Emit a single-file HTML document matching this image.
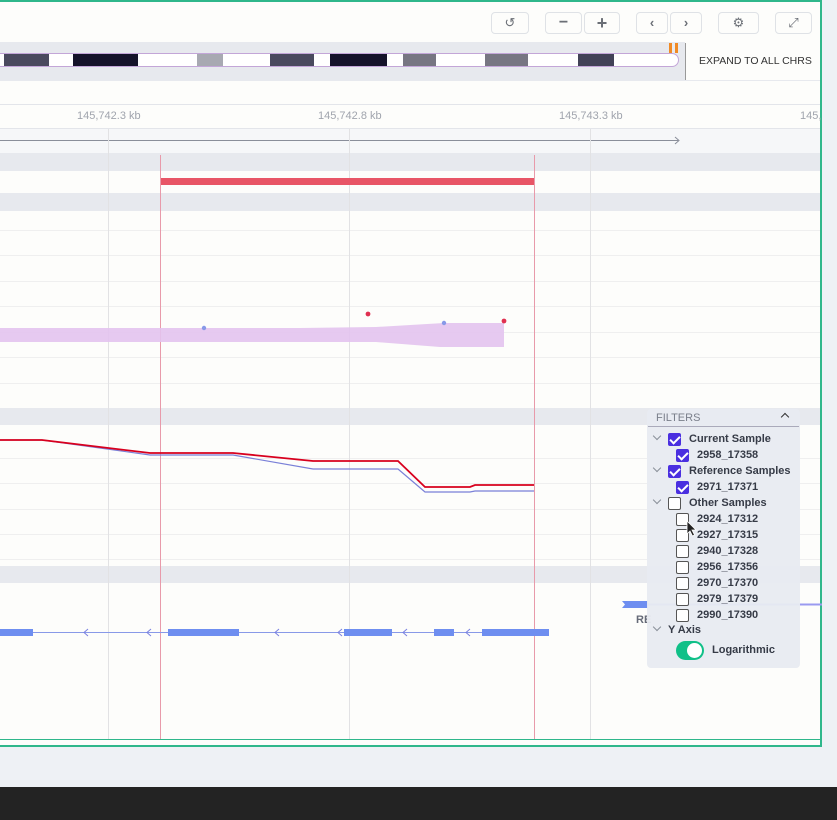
<!DOCTYPE html>
<html><head><style>
*{margin:0;padding:0;box-sizing:border-box}
body{width:837px;height:820px;background:#eef1f5;font-family:"Liberation Sans",sans-serif;position:relative;overflow:hidden}
.a{position:absolute}
.btn{position:absolute;top:12px;height:22px;border:1px solid #dfe2e6;border-radius:4px;background:#fdfdfb;color:#6b6f76;font-size:13px;text-align:center;line-height:20px}
.f{font-size:11px;font-weight:bold;color:#363b47;position:absolute;white-space:nowrap}
.cb{position:absolute;width:13px;height:13px;border:1px solid #555;border-radius:2px;background:#fff}
.cb.on{background:#4a2fe0;border-color:#4a2fe0}
.cb.on::after{content:"";position:absolute;left:3px;top:0px;width:4px;height:8px;border:solid #fff;border-width:0 2px 2px 0;transform:rotate(45deg)}
.chev{position:absolute;width:6px;height:6px;border:solid #8a909a;border-width:0 1.5px 1.5px 0;transform:rotate(45deg)}
</style></head><body>
<div class="a" style="left:0;top:787px;width:837px;height:33px;background:#232323"></div>
<div class="a" style="left:0;top:0;width:822px;height:747px;background:#fdfdfb;border:2px solid #2fb78b;border-left:none"></div>
<div class="btn" style="left:491px;width:38px">&#8634;</div>
<div class="btn" style="left:545px;width:37px;font-size:16px;font-weight:bold">&#8722;</div>
<div class="btn" style="left:584px;width:36px;font-size:18px;font-weight:bold">+</div>
<div class="btn" style="left:636px;width:32px;font-weight:bold">&#8249;</div>
<div class="btn" style="left:670px;width:32px;font-weight:bold">&#8250;</div>
<div class="btn" style="left:718px;width:41px">&#9881;</div>
<div class="btn" style="left:775px;width:37px">&#10530;</div>
<div class="a" style="left:0;top:42px;width:685px;height:38px;background:#e7e9ee"></div>
<div class="a" style="left:0;top:53px;width:679px;height:14px;background:#fff;border:1px solid #c3a6d8;border-left:none;border-radius:0 7px 7px 0"></div>
<div class="a" style="left:4px;top:54px;width:45px;height:12px;background:#4a4a5e"></div>
<div class="a" style="left:73px;top:54px;width:65px;height:12px;background:#15132a"></div>
<div class="a" style="left:197px;top:54px;width:26px;height:12px;background:#a8a9b2"></div>
<div class="a" style="left:270px;top:54px;width:44px;height:12px;background:#4a4a5e"></div>
<div class="a" style="left:330px;top:54px;width:57px;height:12px;background:#15132a"></div>
<div class="a" style="left:403px;top:54px;width:33px;height:12px;background:#777682"></div>
<div class="a" style="left:485px;top:54px;width:43px;height:12px;background:#777682"></div>
<div class="a" style="left:578px;top:54px;width:36px;height:12px;background:#424257"></div>
<div class="a" style="left:669px;top:43px;width:3px;height:10px;background:#f08a24"></div>
<div class="a" style="left:675px;top:43px;width:3px;height:10px;background:#f08a24"></div>
<div class="a" style="left:685px;top:43px;width:1px;height:37px;background:#999"></div>
<div class="a" style="left:699px;top:55px;font-size:10.5px;color:#333">EXPAND TO ALL CHRS</div>
<div class="a" style="left:0;top:80px;width:820px;height:1px;background:#e7e9ee"></div>
<div class="a" style="left:0;top:104px;width:820px;height:1px;background:#e3e5ea"></div>
<div class="a" style="left:77px;top:110px;font-size:11px;color:#a0a4ad">145,742.3 kb</div>
<div class="a" style="left:318px;top:110px;font-size:11px;color:#a0a4ad">145,742.8 kb</div>
<div class="a" style="left:559px;top:110px;font-size:11px;color:#a0a4ad">145,743.3 kb</div>
<div class="a" style="left:800px;top:110px;font-size:11px;color:#a0a4ad">145,</div>
<div class="a" style="left:0;top:128px;width:820px;height:25px;background:#f6f7f9;border-top:1px solid #e3e5ea"></div>
<div class="a" style="left:0;top:153px;width:820px;height:18px;background:#e7e9ee"></div>
<div class="a" style="left:0;top:193px;width:820px;height:18px;background:#e7e9ee"></div>
<div class="a" style="left:0;top:408px;width:820px;height:17px;background:#e7e9ee"></div>
<div class="a" style="left:0;top:566px;width:820px;height:17px;background:#e7e9ee"></div>
<svg class="a" style="left:0;top:0" width="822" height="747">
<line x1="0" y1="140.5" x2="678" y2="140.5" stroke="#8a8e9a"/>
<path d="M675 137l4 3.5-4 3.5" fill="none" stroke="#8a8e9a"/>
<g stroke="#efefef">
<line x1="0" y1="230.5" x2="820" y2="230.5"/><line x1="0" y1="255.5" x2="820" y2="255.5"/><line x1="0" y1="281.5" x2="820" y2="281.5"/><line x1="0" y1="306.5" x2="820" y2="306.5"/><line x1="0" y1="332.5" x2="820" y2="332.5"/><line x1="0" y1="357.5" x2="820" y2="357.5"/><line x1="0" y1="383.5" x2="820" y2="383.5"/>
<line x1="0" y1="458.5" x2="820" y2="458.5"/><line x1="0" y1="483.5" x2="820" y2="483.5"/><line x1="0" y1="509.5" x2="820" y2="509.5"/><line x1="0" y1="534.5" x2="820" y2="534.5"/><line x1="0" y1="559.5" x2="820" y2="559.5"/>
</g>
<g stroke="#e2e2e4"><line x1="108.5" y1="129" x2="108.5" y2="740"/><line x1="349.5" y1="129" x2="349.5" y2="740"/><line x1="590.5" y1="129" x2="590.5" y2="740"/></g>
<rect x="160" y="178" width="375" height="7" fill="#e85566"/>
<g stroke="#e89aaa"><line x1="160.5" y1="155" x2="160.5" y2="740"/><line x1="534.5" y1="155" x2="534.5" y2="740"/></g>
<path d="M0 328H300L376 327L444 323L504 323V347L440 347L376 342H0Z" fill="#e3c3ee" opacity="0.9"/>
<circle cx="204" cy="328" r="2.2" fill="#8899e8"/><circle cx="444" cy="323" r="2.2" fill="#8899e8"/>
<circle cx="368" cy="314" r="2.4" fill="#e03050"/><circle cx="504" cy="321" r="2.4" fill="#e03050"/>
<path d="M0 440H42L150 455H233L313 469H375L398 469L398 469L425 492H470L475 491H534" fill="none" stroke="#7a80d8" stroke-width="1.2"/>
<path d="M0 440H42L150 453H233L313 461H375L398 461L425 487H432L470 487L475 485H534" fill="none" stroke="#d8001e" stroke-width="1.8"/>
<line x1="0" y1="632.5" x2="534" y2="632.5" stroke="#8899e8"/>
<g fill="#6e8ef0"><rect x="0" y="629" width="33" height="7"/><rect x="168" y="629" width="71" height="7"/><rect x="344" y="629" width="48" height="7"/><rect x="434" y="629" width="20" height="7"/><rect x="482" y="629" width="67" height="7"/><path d="M622 601h26v7h-26l3-3.5z"/></g>
<line x1="648" y1="604.5" x2="822" y2="604.5" stroke="#9a9af0" stroke-width="2"/>
<g fill="none" stroke="#7a80e0"><path d="M88 629l-4 3.5 4 3.5M151 629l-4 3.5 4 3.5M279 629l-4 3.5 4 3.5M342 629l-4 3.5 4 3.5M407 629l-4 3.5 4 3.5M470 629l-4 3.5 4 3.5"/></g>
<line x1="0" y1="739.5" x2="820" y2="739.5" stroke="#2fb78b"/>
</svg>
<div class="a" style="left:636px;top:614px;font-size:11px;color:#666b78;font-weight:bold">RE</div>
<div class="a" style="left:647px;top:409px;width:153px;height:259px;background:rgba(232,235,241,0.95);border-radius:4px"></div>
<div class="a" style="left:648px;top:426px;width:151px;height:1px;background:#aab"></div>
<div class="a" style="left:656px;top:412px;font-size:11px;color:#7a7f8b">FILTERS</div>
<div class="a" style="left:782px;top:414px;width:6px;height:6px;border:solid #333;border-width:1.5px 0 0 1.5px;transform:rotate(45deg)"></div>
<div class="chev" style="left:654px;top:433px"></div><div class="cb on" style="left:668px;top:433px"></div><div class="f" style="left:689px;top:433px">Current Sample</div>
<div class="cb on" style="left:676px;top:449px"></div><div class="f" style="left:697px;top:449px">2958_17358</div>
<div class="chev" style="left:654px;top:465px"></div><div class="cb on" style="left:668px;top:465px"></div><div class="f" style="left:689px;top:465px">Reference Samples</div>
<div class="cb on" style="left:676px;top:481px"></div><div class="f" style="left:697px;top:481px">2971_17371</div>
<div class="chev" style="left:654px;top:497px"></div><div class="cb" style="left:668px;top:497px"></div><div class="f" style="left:689px;top:497px">Other Samples</div>
<div class="cb" style="left:676px;top:513px"></div><div class="f" style="left:697px;top:513px">2924_17312</div>
<div class="cb" style="left:676px;top:529px"></div><div class="f" style="left:697px;top:529px">2927_17315</div>
<div class="cb" style="left:676px;top:545px"></div><div class="f" style="left:697px;top:545px">2940_17328</div>
<div class="cb" style="left:676px;top:561px"></div><div class="f" style="left:697px;top:561px">2956_17356</div>
<div class="cb" style="left:676px;top:577px"></div><div class="f" style="left:697px;top:577px">2970_17370</div>
<div class="cb" style="left:676px;top:593px"></div><div class="f" style="left:697px;top:593px">2979_17379</div>
<div class="cb" style="left:676px;top:609px"></div><div class="f" style="left:697px;top:609px">2990_17390</div>
<div class="chev" style="left:654px;top:624px"></div><div class="f" style="left:668px;top:624px">Y Axis</div>
<div class="a" style="left:676px;top:641px;width:28px;height:19px;border-radius:10px;background:#10c088"></div>
<div class="a" style="left:687px;top:643px;width:15px;height:15px;border-radius:50%;background:#fff"></div>
<div class="f" style="left:712px;top:644px">Logarithmic</div>
<svg class="a" style="left:686px;top:520px" width="12" height="18"><path d="M1 1v13l3-3 2.5 5 2-1-2.5-5h4z" fill="#222" stroke="#fff" stroke-width="0.8"/></svg>
</body></html>
